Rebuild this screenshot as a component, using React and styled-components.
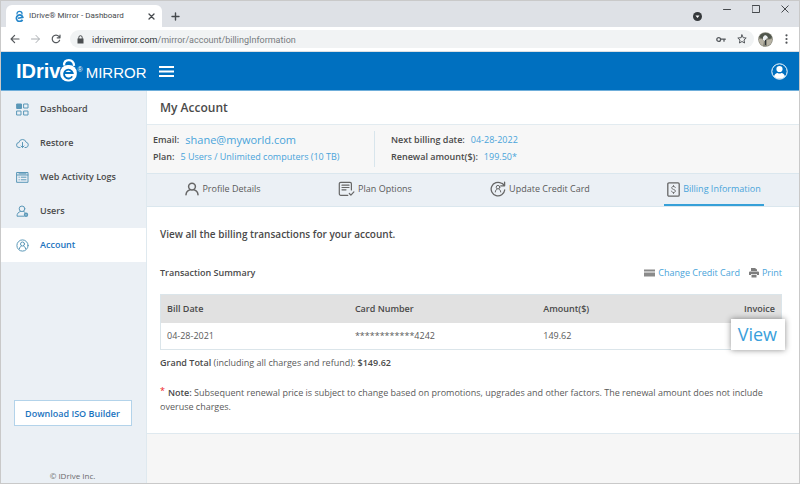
import React from 'react';
import styled, { createGlobalStyle } from 'styled-components';

const GlobalStyle = createGlobalStyle`
  * {
    box-sizing: border-box;
  }
  body {
    margin: 0;
    background: #ffffff;
    color: #4a4a4a;
    font-family: 'Open Sans', 'Liberation Sans', sans-serif;
    font-size: 9px;
    line-height: 14px;
  }
  button {
    font-family: inherit;
    cursor: pointer;
  }
  svg {
    display: block;
    flex-shrink: 0;
  }
`;

const Window = styled.div`
  display: flex;
  flex-direction: column;
  min-height: 100vh;
  border: 1px solid #c9c9c9;
`;

const TabStrip = styled.div`
  display: flex;
  align-items: flex-end;
  height: 26px;
  padding-left: 5px;
  background: #dee1e6;
  color: #45494d;
`;

const BrowserTab = styled.div`
  display: flex;
  align-items: center;
  width: 156px;
  height: 22px;
  padding: 0 7px 0 9px;
  border-radius: 6px 6px 0 0;
  background: #ffffff;
  font-family: Roboto, sans-serif;
  font-size: 8px;
`;

const TabTitle = styled.span`
  flex: 1;
  margin-left: 5px;
  white-space: nowrap;
`;

const IconButton = styled.button`
  display: flex;
  align-items: center;
  justify-content: center;
  padding: 0;
  border: none;
  background: none;
  color: inherit;
`;

const NewTab = styled(IconButton)`
  height: 22px;
  margin-left: 9px;
`;

const WindowControls = styled.div`
  display: flex;
  gap: 21px;
  align-self: flex-start;
  height: 20px;
  margin-left: auto;
  padding: 4px 10px 0 0;
`;

const DownArrow = styled(IconButton)`
  align-self: flex-end;
`;

const WindowButton = styled(IconButton)`
  align-self: flex-start;
`;

const Toolbar = styled.div`
  display: flex;
  align-items: center;
  height: 25px;
  padding: 0 9px;
  border-bottom: 1px solid #dcdfe2;
  color: #55595d;
`;

const NavButtons = styled.div`
  display: flex;
  gap: 10px;
`;

const AddressBar = styled.div`
  display: flex;
  flex: 1;
  align-items: center;
  height: 18px;
  margin: 0 4px 0 9px;
  padding: 0 7px;
  border-radius: 9px;
  background: #f1f3f4;
`;

const Address = styled.div`
  flex: 1;
  margin-left: 8px;
  padding-top: 2px;
  color: #777b7f;
  font-family: Roboto, sans-serif;
  font-size: 9px;

  b {
    color: #303336;
    font-weight: 400;
  }
`;

const AddressActions = styled.div`
  display: flex;
  align-items: center;
  gap: 11px;
`;

const MenuDots = styled(IconButton)`
  width: 8px;
  margin-left: 9px;
`;

const Header = styled.header`
  display: flex;
  align-items: center;
  height: 39px;
  padding: 0 11px 0 15px;
  border-bottom: 1px solid #6faeda;
  background: #0070c0;
  color: #ffffff;
`;

const Logo = styled.a`
  display: flex;
  align-items: flex-end;
  height: 28px;
  padding-bottom: 2px;
  color: #ffffff;
  font-family: 'Liberation Sans', Arial, sans-serif;
  text-decoration: none;
`;

const LogoName = styled.span`
  font-size: 20px;
  font-weight: 700;
  line-height: 24px;
`;

const LogoMark = styled.sup`
  align-self: center;
  font-size: 7px;
  line-height: 12px;
`;

const LogoProduct = styled.span`
  margin-left: 3px;
  font-size: 15px;
  line-height: 20px;
`;

const MenuButton = styled(IconButton)`
  margin-left: 13px;
`;

const ProfileButton = styled(IconButton)`
  margin-left: auto;
`;

const Body = styled.div`
  display: flex;
  flex: 1;
`;

const Sidebar = styled.aside`
  display: flex;
  flex-direction: column;
  width: 146px;
  flex-shrink: 0;
  padding-top: 1px;
  border-right: 1px solid #dfe9ef;
  background: #ebf0f5;
`;

const SideLink = styled.a`
  display: flex;
  align-items: center;
  gap: 11px;
  height: 34px;
  padding-left: 15px;
  background: ${(p) => (p.$active ? '#ffffff' : 'transparent')};
  color: ${(p) => (p.$active ? '#1a73be' : '#4a4a4a')};
  font-weight: 600;
  text-decoration: none;

  svg {
    color: #5b98b8;
  }
`;

const SideFooter = styled.div`
  display: flex;
  flex-direction: column;
  align-items: center;
  gap: 43px;
  margin-top: auto;
  padding-right: 2px;
  color: #6a6a6a;
  font-size: 8px;
`;

const DownloadButton = styled.button`
  width: 118px;
  height: 26px;
  padding: 0;
  border: 1px solid #b3d3ea;
  background: #ffffff;
  color: #1a73be;
  font-size: 9px;
  font-weight: 600;
`;

const Main = styled.main`
  flex: 1;
  min-width: 0;
  background: #f6f6f6;
`;

const PageTitle = styled.h1`
  height: 34px;
  margin: 0;
  padding-left: 13px;
  border-bottom: 1px solid #e2ebf0;
  background: #ffffff;
  font-size: 12px;
  font-weight: 600;
  line-height: 34px;
`;

const Summary = styled.div`
  display: flex;
  height: 48px;
  padding: 6px;
  background: #f7f7f7;
`;

const SummaryColumn = styled.dl`
  width: 221px;
  margin: 0;
  padding-left: ${(p) => (p.$divided ? 16 : 0)}px;
  border-left: ${(p) => (p.$divided ? '1px solid #d8e5ec' : 'none')};
`;

const SummaryRow = styled.div`
  display: flex;
  align-items: center;
  gap: 6px;
  height: 17px;

  dt {
    font-weight: 600;
  }
  dd {
    margin: 0;
    color: #49a4da;
    font-size: ${(p) => (p.$large ? 11 : 9)}px;
    white-space: nowrap;
  }
`;

const Tabs = styled.nav`
  display: grid;
  grid-template-columns: 152fr 152fr 178fr 170fr;
  justify-items: center;
  height: 34px;
  border-top: 1px solid #dbe7ee;
  border-bottom: 1px solid #dbe7ee;
  background: #ebf0f5;
`;

const TabLink = styled.a`
  display: flex;
  align-items: center;
  gap: 3px;
  padding: 0 3px;
  border-bottom: 2px solid ${(p) => (p.$active ? '#36a0d8' : 'transparent')};
  color: ${(p) => (p.$active ? '#49a4da' : '#5a5a5a')};
  text-decoration: none;
  white-space: nowrap;

  svg {
    color: #666666;
  }
`;

const Panel = styled.section`
  padding: 19px 17px 19px 13px;
  border-bottom: 1px solid #dfe9ef;
  background: #ffffff;
`;

const PanelTitle = styled.h2`
  margin: 0 0 24px;
  font-size: 10px;
  font-weight: 600;
  line-height: 16px;
`;

const TableBar = styled.div`
  display: flex;
  align-items: center;
  gap: 9px;
  margin-bottom: 14px;
`;

const TableTitle = styled.h3`
  flex: 1;
  margin: 0;
  font-size: 9px;
  font-weight: 600;
`;

const ActionLink = styled.a`
  display: flex;
  align-items: center;
  gap: 3px;
  color: #49a4da;
  text-decoration: none;
`;

const Transactions = styled.table`
  width: 100%;
  border: 1px solid #dbe5ea;
  border-collapse: collapse;
  table-layout: fixed;

  th,
  td {
    padding: 0 6px;
    text-align: left;
  }
  th {
    height: 28px;
    background: #e1e1e1;
    font-weight: 600;
  }
  td {
    height: 27px;
    color: #5a5a5a;
  }
  th:last-child {
    width: 9%;
    text-align: right;
  }
`;

const InvoiceCell = styled.td`
  position: relative;
`;

const ViewLink = styled.a`
  position: absolute;
  top: -4px;
  right: -4px;
  padding: 0 8px 0 7px;
  background: #ffffff;
  box-shadow: 0 0 6px rgba(0, 0, 0, 0.45);
  color: #3a9fdb;
  font-size: 18px;
  line-height: 31px;
  text-decoration: none;
`;

const Text = styled.p`
  margin: ${(p) => (p.$spaced ? 16 : 6)}px 0 0;
  color: #5a5a5a;

  strong {
    color: #4a4a4a;
    font-weight: 600;
  }
`;

const Asterisk = styled.span`
  float: left;
  height: 10px;
  margin-right: 3px;
  color: #ee2222;
  line-height: 10px;
`;

const stroke = { fill: 'none', stroke: 'currentColor', strokeLinecap: 'round', strokeLinejoin: 'round' };

const Favicon = () => (
  <svg width="9" height="12" viewBox="0 0 18 24">
    <path d="M4 9V7a5 4.5 0 0 1 10 0v2" fill="none" stroke="#2586ca" strokeWidth="2.5" />
    <path d="M15 19.5A6.5 6.5 0 1 1 15.5 14.5L6 16.5" fill="none" stroke="#2586ca" strokeWidth="3.4" />
  </svg>
);

const LogoLock = () => (
  <svg width="17" height="26" viewBox="0 0 17 26">
    <path d="M4 8.5C4 5 6 3.2 8.8 3.2c3 0 4.9 1.8 5.3 5.6" fill="none" stroke="#fff" strokeWidth="2.2" />
    <rect x="0.2" y="8" width="16.6" height="16.6" rx="7.6" fill="#fff" />
    <path d="M12.2 19.4a4.4 4.4 0 1 1 .5-3.4H4.6" fill="none" stroke="#0070c0" strokeWidth="1.8" />
  </svg>
);

const Avatar = () => (
  <svg width="15" height="15" viewBox="0 0 15 15">
    <circle cx="7.5" cy="7.5" r="7.3" fill="#858578" />
    <path d="M1 5a7.2 7.2 0 0 1 13 0l-2 2-3-1-3 1-3-1z" fill="#50564c" />
    <path d="M1 7h3l2 2-1 5a7 7 0 0 1-4-5zM9 8l5-1a7 7 0 0 1-5 7z" fill="#b8b3a5" />
    <path d="M5 5l2-2 2 1 1 2-2 1-1 2-2-1z" fill="#edf0f2" />
    <path d="M7 8h1v5H7z" fill="#30343a" />
  </svg>
);

const DashboardIcon = () => (
  <svg width="13" height="13" viewBox="0 0 13 13" {...stroke}>
    <path d="M1 1h4.5v4.5H1z" fill="currentColor" />
    <path d="M8 1h4v4H8zM1 8h4v4H1zM8 8h4v4H8z" />
  </svg>
);

const RestoreIcon = () => (
  <svg width="13" height="13" viewBox="0 0 13 13" {...stroke}>
    <path d="M4 10.5H3.2a2.5 2.5 0 0 1-.3-5 3.7 3.7 0 0 1 7.2-.3 2.7 2.7 0 0 1 0 5.3H9M6.5 5.5v5M5 9l1.5 1.5L8 9" />
  </svg>
);

const LogsIcon = () => (
  <svg width="13" height="13" viewBox="0 0 13 13" {...stroke}>
    <path d="M1 1.5h11v9.8H1zM1 4h11M3 2.8h7" />
    <path d="M3 6.2h.3M5.2 6.2H10M3 8.8h.3M5.2 8.8H10" />
  </svg>
);

const UsersIcon = () => (
  <svg width="13" height="13" viewBox="0 0 13 13" {...stroke}>
    <circle cx="6" cy="3.8" r="2.8" />
    <path d="M8 11.2H1c0-2.6 1.2-4 3.4-4.7M7.5 6.4l1.4.9" />
    <circle cx="10" cy="9.8" r="1.4" strokeWidth="1.6" />
  </svg>
);

const AccountIcon = () => (
  <svg width="13" height="13" viewBox="0 0 13 13" {...stroke}>
    <circle cx="6.5" cy="6.5" r="5.6" />
    <circle cx="6.5" cy="5" r="2" />
    <path d="M3.4 9.8c.2-1.6 1-2.4 2-2.8M9.6 9.8c-.2-1.6-1-2.4-2-2.8" />
  </svg>
);

const ProfileIcon = () => (
  <svg width="14" height="14" viewBox="0 0 14 14" {...stroke} strokeWidth="1.5">
    <circle cx="7" cy="4.6" r="3.4" />
    <path d="M1 12.8c.2-2.8 1.6-4.2 3.8-4.9M13 12.8c-.2-2.8-1.6-4.2-3.8-4.9" />
  </svg>
);

const PlanIcon = () => (
  <svg width="17" height="16" viewBox="0 0 17 16" {...stroke} strokeWidth="1.2">
    <path d="M13.4 9V2.8A1.5 1.5 0 0 0 12 1.3H2.8a1.5 1.5 0 0 0-1.5 1.5v10a1.5 1.5 0 0 0 1.5 1.5h7M4 4.2h7M4 6.5h7M4 8.8h4M11.3 12.5l1.6 1.6 3-3.2" />
  </svg>
);

const UpdateIcon = () => (
  <svg width="16" height="16" viewBox="0 0 16 16" {...stroke} strokeWidth="1.3">
    <path d="M11.5 2.3A6.8 6.8 0 1 0 14.7 9M14.6 1.2v3.6h-3.8M14.4 4.6l-2-2.1" />
    <circle cx="8" cy="6.2" r="1.8" strokeWidth="1" />
    <path d="M5.3 11c.2-1.7.8-2.4 1.7-3M10.7 11c-.2-1.7-.8-2.4-1.7-3" strokeWidth="1" />
  </svg>
);

const BillingIcon = () => (
  <svg width="13" height="15" viewBox="0 0 13 15" {...stroke}>
    <rect x=".8" y=".8" width="11.4" height="13.4" rx="1.2" strokeWidth="1.3" />
    <path d="M8.3 5.6c-.2-.8-.9-1.2-1.8-1.2-1 0-1.8.5-1.8 1.4 0 2.1 3.7 1.2 3.7 3.2 0 1-.9 1.5-1.9 1.5s-1.8-.5-2-1.4M6.5 3.5v.9M6.5 10.5v1" strokeWidth=".9" />
  </svg>
);

const CardIcon = () => (
  <svg width="11" height="8" viewBox="0 0 11 8" fill="#8a8a8a">
    <path d="M0 .5h11v2H0zM0 3.5h11v4H0z" />
  </svg>
);

const PrintIcon = () => (
  <svg width="10" height="10" viewBox="0 0 10 10" fill="#7d7d7d">
    <path d="M2 0h4l2 1.5V3H2zM1 3.6h8a1 1 0 0 1 1 1V7H8V6H2v1H0V4.6a1 1 0 0 1 1-1zM2.5 6.8h5v2.7h-5z" />
  </svg>
);

const sideItems = [
  { label: 'Dashboard', icon: DashboardIcon },
  { label: 'Restore', icon: RestoreIcon },
  { label: 'Web Activity Logs', icon: LogsIcon },
  { label: 'Users', icon: UsersIcon },
  { label: 'Account', icon: AccountIcon, active: true },
];

const tabItems = [
  { label: 'Profile Details', icon: ProfileIcon },
  { label: 'Plan Options', icon: PlanIcon },
  { label: 'Update Credit Card', icon: UpdateIcon },
  { label: 'Billing Information', icon: BillingIcon, active: true },
];

const BrowserChrome = () => (
  <>
    <TabStrip>
      <BrowserTab>
        <Favicon />
        <TabTitle>IDrive® Mirror - Dashboard</TabTitle>
        <IconButton aria-label="Close tab">
          <svg width="7" height="7" viewBox="0 0 7 7" {...stroke} strokeWidth="1.3"><path d="M1 1l5 5M6 1L1 6" /></svg>
        </IconButton>
      </BrowserTab>
      <NewTab aria-label="New tab">
        <svg width="9" height="9" viewBox="0 0 9 9" {...stroke} strokeWidth="1.4"><path d="M4.5 1v7M1 4.5h7" /></svg>
      </NewTab>
      <WindowControls>
        <DownArrow aria-label="Search tabs">
          <svg width="9" height="9" viewBox="0 0 9 9"><circle cx="4.5" cy="4.5" r="4.5" fill="#35383b" /><path d="M2.5 3.5h4l-2 2.6z" fill="#fff" /></svg>
        </DownArrow>
        <WindowButton aria-label="Minimize">
          <svg width="8" height="8" viewBox="0 0 8 8" {...stroke}><path d="M.5 4.5h7" /></svg>
        </WindowButton>
        <WindowButton aria-label="Maximize">
          <svg width="8" height="8" viewBox="0 0 8 8" {...stroke}><path d="M.5.5h7v7h-7z" /></svg>
        </WindowButton>
        <WindowButton aria-label="Close">
          <svg width="8" height="8" viewBox="0 0 8 8" {...stroke}><path d="M.8.8l6.4 6.4M7.2.8L.8 7.2" /></svg>
        </WindowButton>
      </WindowControls>
    </TabStrip>
    <Toolbar>
      <NavButtons>
        <IconButton aria-label="Back">
          <svg width="10" height="10" viewBox="0 0 10 10" {...stroke} strokeWidth="1.2"><path d="M9 5H1.2M4.6 1.4L1.1 5l3.5 3.6" /></svg>
        </IconButton>
        <IconButton aria-label="Forward">
          <svg width="11" height="10" viewBox="0 0 11 10" {...stroke} stroke="#aaaeb2"><path d="M1.5 5h7.8M6 1.4L9.4 5 6 8.6" /></svg>
        </IconButton>
        <IconButton aria-label="Reload">
          <svg width="10" height="10" viewBox="0 0 10 10" {...stroke} strokeWidth="1.2"><path d="M8.6 6.2A3.8 3.8 0 1 1 7.9 2.4L8.8 3.5M9 1v2.8H6.2" /></svg>
        </IconButton>
      </NavButtons>
      <AddressBar>
        <svg width="7" height="9" viewBox="0 0 7 9"><path d="M.5 3.5h6v5h-6z" fill="#4b4e51" /><path d="M1.8 4V2.4a1.7 1.7 0 0 1 3.4 0V4" fill="none" stroke="#4b4e51" /></svg>
        <Address>
          <b>idrivemirror.com</b>/mirror/account/billingInformation
        </Address>
        <AddressActions>
          <svg width="10" height="7" viewBox="0 0 10 7" {...stroke} strokeWidth="1.3"><circle cx="2.7" cy="3.5" r="1.9" /><path d="M4.8 3.2H9.3M8 3.4v1.8" /></svg>
          <svg width="10" height="10" viewBox="0 0 10 10" {...stroke}><path d="M5 .9l1.2 2.8 3 .3L7 6l.6 3L5 7.5 2.4 9 3 6 .8 4l3-.3z" /></svg>
        </AddressActions>
      </AddressBar>
      <Avatar />
      <MenuDots aria-label="Browser menu">
        <svg width="3" height="10" viewBox="0 0 3 10" fill="#505357"><circle cx="1.5" cy="1.3" r="1.1" /><circle cx="1.5" cy="5" r="1.1" /><circle cx="1.5" cy="8.7" r="1.1" /></svg>
      </MenuDots>
    </Toolbar>
  </>
);

const App = () => (
  <Window>
    <GlobalStyle />
    <BrowserChrome />
    <Header>
      <Logo href="#">
        <LogoName>IDriv</LogoName>
        <LogoLock />
        <LogoMark>®</LogoMark>
        <LogoProduct>MIRROR</LogoProduct>
      </Logo>
      <MenuButton aria-label="Toggle menu">
        <svg width="15" height="13" viewBox="0 0 15 13" fill="#fff"><path d="M0 1h15v2H0zM0 5.5h15v2H0zM0 10h15v2H0z" /></svg>
      </MenuButton>
      <ProfileButton aria-label="Profile">
        <svg width="17" height="17" viewBox="0 0 17 17"><circle cx="8.5" cy="8.5" r="7.7" fill="none" stroke="#fff" /><circle cx="8.5" cy="6" r="3.1" fill="#fff" /><path d="M3 13.4c.5-2.2 2-3.2 3.6-3.5 1.2.7 2.6.7 3.8 0 1.6.3 3.1 1.3 3.6 3.5a7.4 7.4 0 0 1-11 0z" fill="#fff" /></svg>
      </ProfileButton>
    </Header>
    <Body>
      <Sidebar>
        {sideItems.map(({ label, icon: Icon, active }) => (
          <SideLink href="#" key={label} $active={active}>
            <Icon />
            {label}
          </SideLink>
        ))}
        <SideFooter>
          <DownloadButton>Download ISO Builder</DownloadButton>
          <span>© IDrive Inc.</span>
        </SideFooter>
      </Sidebar>
      <Main>
        <PageTitle>My Account</PageTitle>
        <Summary>
          <SummaryColumn>
            <SummaryRow $large>
              <dt>Email:</dt>
              <dd>shane@myworld.com</dd>
            </SummaryRow>
            <SummaryRow>
              <dt>Plan:</dt>
              <dd>5 Users / Unlimited computers (10 TB)</dd>
            </SummaryRow>
          </SummaryColumn>
          <SummaryColumn $divided>
            <SummaryRow>
              <dt>Next billing date:</dt>
              <dd>04-28-2022</dd>
            </SummaryRow>
            <SummaryRow>
              <dt>Renewal amount($):</dt>
              <dd>199.50*</dd>
            </SummaryRow>
          </SummaryColumn>
        </Summary>
        <Tabs>
          {tabItems.map(({ label, icon: Icon, active }) => (
            <TabLink href="#" key={label} $active={active}>
              <Icon />
              {label}
            </TabLink>
          ))}
        </Tabs>
        <Panel>
          <PanelTitle>View all the billing transactions for your account.</PanelTitle>
          <TableBar>
            <TableTitle>Transaction Summary</TableTitle>
            <ActionLink href="#"><CardIcon />Change Credit Card</ActionLink>
            <ActionLink href="#"><PrintIcon />Print</ActionLink>
          </TableBar>
          <Transactions>
            <thead>
              <tr>
                <th>Bill Date</th>
                <th>Card Number</th>
                <th>Amount($)</th>
                <th>Invoice</th>
              </tr>
            </thead>
            <tbody>
              <tr>
                <td>04-28-2021</td>
                <td>************4242</td>
                <td>149.62</td>
                <InvoiceCell>
                  <ViewLink href="#">View</ViewLink>
                </InvoiceCell>
              </tr>
            </tbody>
          </Transactions>
          <Text>
            <strong>Grand Total</strong> (including all charges and refund): <strong>$149.62</strong>
          </Text>
          <Text $spaced>
            <Asterisk>*</Asterisk>
            <strong>Note:</strong> Subsequent renewal price is subject to change based on
            promotions, upgrades and other factors. The renewal amount does not include overuse charges.
          </Text>
        </Panel>
      </Main>
    </Body>
  </Window>
);

export default App;
